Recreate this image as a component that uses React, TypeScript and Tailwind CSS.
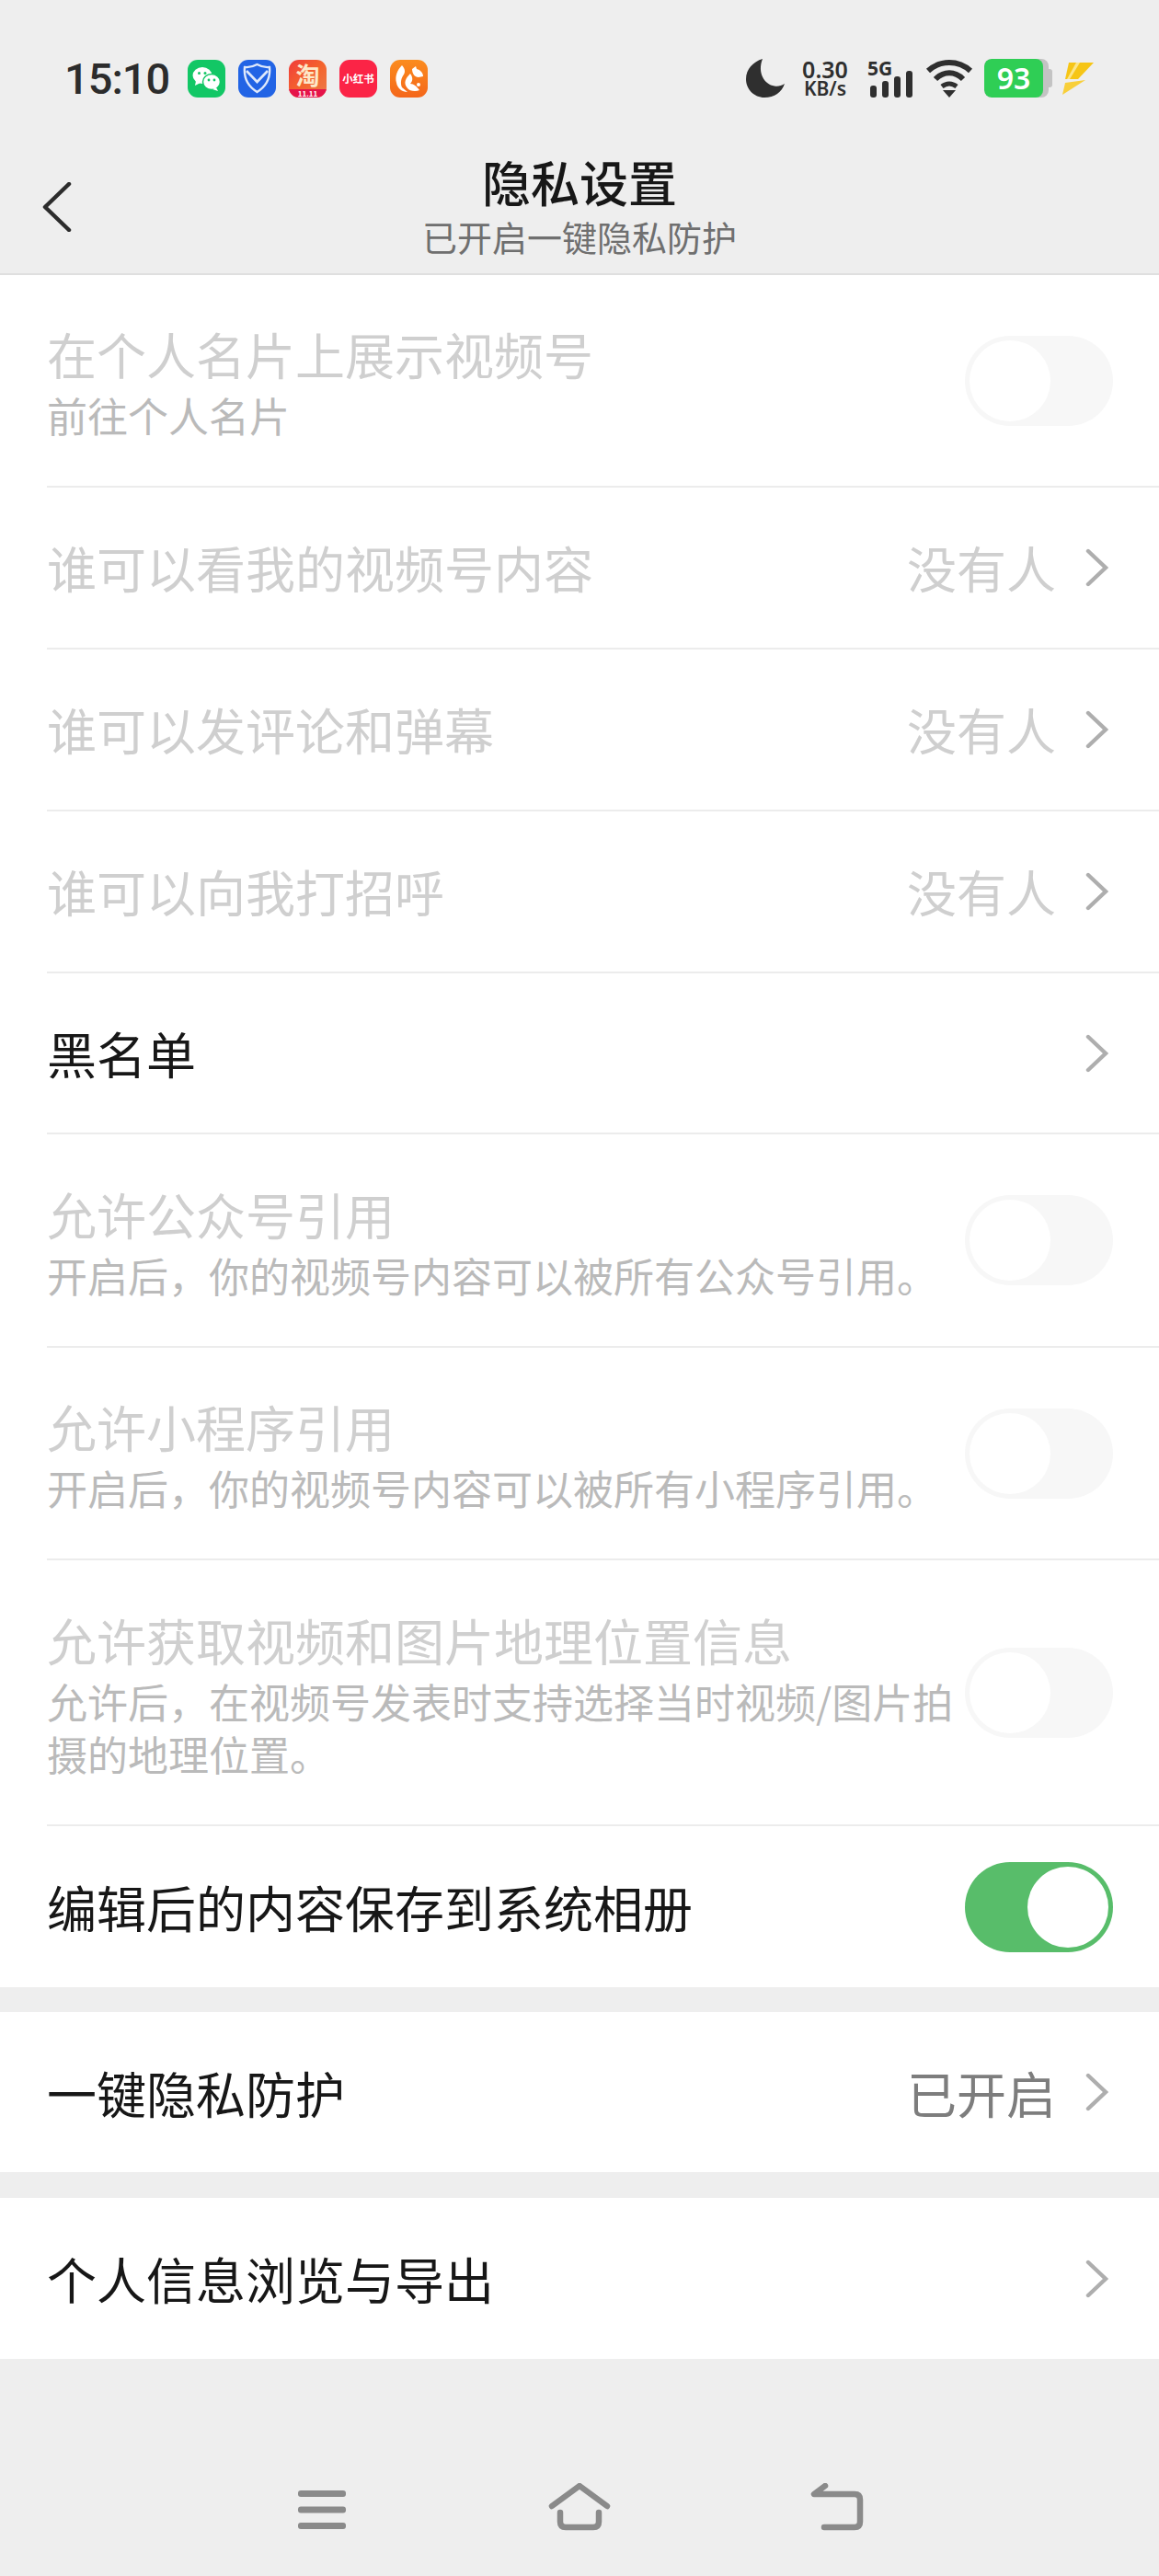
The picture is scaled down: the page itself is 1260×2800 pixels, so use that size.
type RowData = {
  title: string;
  sub?: string;
  value?: string;
  height: string;
  dim?: boolean;
  toggle?: "on" | "off";
  chevron?: boolean;
};

const rows: RowData[] = [
  { title: "在个人名片上展示视频号", sub: "前往个人名片", height: "h-[231px]", dim: true, toggle: "off" },
  { title: "谁可以看我的视频号内容", value: "没有人", height: "h-[176px]", dim: true, chevron: true },
  { title: "谁可以发评论和弹幕", value: "没有人", height: "h-[176px]", dim: true, chevron: true },
  { title: "谁可以向我打招呼", value: "没有人", height: "h-[176px]", dim: true, chevron: true },
  { title: "黑名单", height: "h-[175px]", chevron: true },
  { title: "允许公众号引用", sub: "开启后，你的视频号内容可以被所有公众号引用。", height: "h-[232px]", dim: true, toggle: "off" },
  { title: "允许小程序引用", sub: "开启后，你的视频号内容可以被所有小程序引用。", height: "h-[231px]", dim: true, toggle: "off" },
  { title: "允许获取视频和图片地理位置信息", sub: "允许后，在视频号发表时支持选择当时视频/图片拍摄的地理位置。", height: "h-[289px]", dim: true, toggle: "off" },
  { title: "编辑后的内容保存到系统相册", height: "h-[175px]", toggle: "on" },
];

const Chevron = () => (
  <svg width="26" height="42" viewBox="0 0 26 42" fill="none" className="mr-[4px] shrink-0">
    <path d="M3 3 L22 21 L3 39" stroke="#aeaeae" strokeWidth="4.4" strokeLinecap="round" strokeLinejoin="miter" />
  </svg>
);

const Toggle = ({ on }: { on: boolean }) => (
  <div className={`flex h-[98px] w-[161px] shrink-0 items-center rounded-full px-[5px] ${on ? "justify-end bg-[#58bd6a]" : "justify-start bg-[#f7f7f7]"}`}>
    <div className="h-[88px] w-[88px] rounded-full bg-white" />
  </div>
);

const Row = ({ row, last }: { row: RowData; last?: boolean }) => (
  <div className={`flex ${row.height} items-center pr-[50px] ${last ? "" : "border-b-2 border-[#ececec]"} ml-[51px]`}>
    <div className={`min-w-0 flex-1 ${row.sub ? "pt-[5px]" : ""}`}>
      <div className={`text-[54px] leading-[66px] ${row.dim ? "text-[#cfcfcf]" : "text-[#171717]"}`}>{row.title}</div>
      {row.sub && <div className="mt-[5px] text-[44px] leading-[57px] text-[#bababa]">{row.sub}</div>}
    </div>
    {row.value && <div className="mr-[32px] text-[54px] leading-[66px] text-[#cfcfcf]">{row.value}</div>}
    {row.chevron && <Chevron />}
    {row.toggle && <Toggle on={row.toggle === "on"} />}
  </div>
);

const AppIcons = () => (
  <div className="flex gap-[14px]">
    <div className="flex h-[41px] w-[41px] items-center justify-center rounded-[11px] bg-[#12c765]">
      <svg width="31" height="27" viewBox="0 0 31 27">
        <ellipse cx="11" cy="10" rx="10.5" ry="9" fill="#fff" />
        <path d="M4 16 L3 21 L9 18Z" fill="#fff" />
        <ellipse cx="21" cy="17" rx="9.5" ry="8.5" fill="#fff" stroke="#12c765" strokeWidth="1.5" />
        <path d="M26 23 L28 27 L22 25Z" fill="#fff" />
        <circle cx="7.5" cy="7.5" r="1.5" fill="#12c765" />
        <circle cx="14" cy="7.5" r="1.5" fill="#12c765" />
        <circle cx="18" cy="15" r="1.4" fill="#12c765" />
        <circle cx="24" cy="15" r="1.4" fill="#12c765" />
      </svg>
    </div>
    <div className="flex h-[41px] w-[41px] items-center justify-center rounded-[11px] bg-[#2264e5]">
      <svg width="31" height="34" viewBox="0 0 31 34" fill="none">
        <path d="M15.5 2 C20 4.5 25 5.5 29 5 C30 15 27 25 15.5 32 C4 25 1 15 2 5 C6 5.5 11 4.5 15.5 2Z" stroke="#dfe9fb" strokeWidth="2.4" />
        <path d="M4 9 L15.5 21 L27 9" stroke="#dfe9fb" strokeWidth="2.6" />
      </svg>
    </div>
    <div className="flex h-[41px] w-[41px] flex-col items-center overflow-hidden rounded-[11px] bg-gradient-to-br from-[#f0393a] via-[#f4632c] to-[#eb7c4a]">
      <span className="h-[32px] text-[26px] leading-[32px] font-bold text-[#fde8c9]">淘</span>
      <span className="h-[9px] w-full bg-[#e5134a] text-center text-[8px] leading-[9px] font-bold text-white">11.11</span>
    </div>
    <div className="flex h-[41px] w-[41px] items-center justify-center rounded-[11px] bg-[#fb2446]">
      <span className="text-[11.5px] leading-[14px] font-bold whitespace-nowrap text-white">小红书</span>
    </div>
    <div className="flex h-[41px] w-[41px] items-center justify-center rounded-[11px] bg-gradient-to-b from-[#fb8c1e] to-[#f4661a]">
      <svg width="33" height="31" viewBox="0 0 33 31" fill="#fff">
        <path d="M9 1 C4 6 1 13 3 20 C4 26 9 30 15 30 L9 25 C7 20 8 15 11 11 C13 8 12 4 9 1Z" />
        <path d="M18 10 C13 15 10 20 15 26 C17 29 24 30 28 28 C25 24 22 21 18 21 C21 18 21 14 18 10Z" />
        <path d="M20 5 L24 2 L25 5 C29 6 32 9 32 13 L27 14 C23 14 20 10 20 5Z" />
        <circle cx="27" cy="22" r="2" />
      </svg>
    </div>
  </div>
);

const StatusRight = () => (
  <div className="flex items-center">
    <svg width="42" height="42" viewBox="0 0 42 42" className="shrink-0">
      <path d="M18 0 C8 3 0 11 0 22 C0 33 9 42 20 42 C31 42 39 36 42 27 C38 29.5 35 30 31 29.5 C20 28 12 15 18 0Z" fill="#2f2f2f" />
    </svg>
    <div className="ml-[18px] flex h-[42px] w-[52px] flex-col items-center justify-between font-['Noto_Sans',sans-serif] font-semibold text-[#2f2f2f]">
      <span className="h-[22px] text-[25px] leading-[22px]">0.30</span>
      <span className="h-[20px] text-[21px] leading-[20px]">KB/s</span>
    </div>
    <div className="relative ml-[20px] h-[42px] w-[50px] font-['Noto_Sans',sans-serif] text-[21px] leading-[20px] font-bold text-[#2f2f2f]">
      5G
      <svg width="50" height="42" viewBox="0 0 50 42" fill="#2f2f2f" className="absolute top-0 left-0">
        <rect x="3" y="29" width="7" height="13" rx="3" />
        <rect x="16" y="24" width="7" height="18" rx="3" />
        <rect x="29" y="19" width="7" height="23" rx="3" />
        <rect x="42" y="13" width="7" height="29" rx="3" />
      </svg>
    </div>
    <svg width="52" height="42" viewBox="0 0 52 42" fill="none" className="ml-[13px] shrink-0" stroke="#2f2f2f" strokeWidth="6">
      <path d="M3 13 C16 1 36 1 49 13" />
      <path d="M11 22 C20 13 32 13 41 22" />
      <path d="M18 30 C23 26 29 26 34 30" strokeWidth="5" />
      <path d="M19 34 H33 L26 42Z" fill="#2f2f2f" stroke="none" />
    </svg>
    <div className="ml-[12px] flex items-center">
      <div className="flex h-[42px] w-[70px] items-center overflow-hidden rounded-[8px] bg-[#c3c3c3]">
        <div className="flex h-full w-[64px] items-center justify-center rounded-[8px] bg-[#2fce55] font-['Noto_Sans',sans-serif] text-[32px] font-semibold text-white">93</div>
      </div>
      <div className="h-[20px] w-[4px] rounded-r-[3px] bg-[#c3c3c3]" />
    </div>
    <svg width="34" height="36" viewBox="0 0 34 36" className="ml-[11px] shrink-0">
      <path d="M7 1 H34 L17 19 H3Z" fill="#f6c516" />
      <path d="M15 1 H19 L8 19 H5Z" fill="#fbe58a" />
      <path d="M3 23 L25 20 L0 36Z" fill="#f8cf3a" />
    </svg>
  </div>
);

export default function App() {
  return (
    <div className="flex h-[2800px] w-[1260px] flex-col overflow-hidden bg-[#eeeeee] font-['Noto_Sans_CJK_SC',sans-serif]">
      <div className="flex h-[64px] shrink-0" />
      <div className="flex h-[42px] shrink-0 items-center justify-between pr-[71px] pl-[70px]">
        <div className="flex items-center">
          <span className="w-[134px] font-['Roboto',sans-serif] text-[47px] leading-none font-medium tracking-[-1px] text-[#2c2c2c]">15:10</span>
          <AppIcons />
        </div>
        <StatusRight />
      </div>
      <div className="grid h-[193px] shrink-0 grid-cols-[1fr_auto_1fr] items-center border-b-2 border-[#dfdfdf]">
        <div className="pt-[46px] pl-[46px]">
          <svg width="32" height="54" viewBox="0 0 32 54" fill="none">
            <path d="M29 2 L3 27 L29 52" stroke="#2c2c2c" strokeWidth="4.5" strokeLinecap="round" strokeLinejoin="round" />
          </svg>
        </div>
        <div className="flex flex-col items-center pt-[42px]">
          <span className="text-[53px] leading-[64px] font-medium text-[#171717]">隐私设置</span>
          <span className="mt-[4px] text-[38px] leading-[48px] text-[#6f6f6f]">已开启一键隐私防护</span>
        </div>
        <div />
      </div>

      <div className="shrink-0 bg-white">
        {rows.map((row, index) => (
          <Row key={row.title} row={row} last={index === rows.length - 1} />
        ))}
      </div>

      <div className="mt-[27px] flex h-[174px] shrink-0 items-center bg-white pr-[50px] pl-[51px]">
        <div className="flex-1 text-[54px] text-[#171717]">一键隐私防护</div>
        <div className="mr-[32px] text-[54px] text-[#7d7d7d]">已开启</div>
        <Chevron />
      </div>
      <div className="mt-[28px] flex h-[175px] shrink-0 items-center bg-white pr-[50px] pl-[51px]">
        <div className="flex-1 text-[54px] text-[#171717]">个人信息浏览与导出</div>
        <Chevron />
      </div>

      <div className="mt-[142px] flex shrink-0 justify-center">
        <div className="flex w-[280px] justify-center">
          <svg width="54" height="44" viewBox="0 0 54 44" fill="#8a8a8a">
            <rect x="1" y="1" width="52" height="7" rx="3" />
            <rect x="1" y="18.5" width="52" height="7" rx="3" />
            <rect x="1" y="36" width="52" height="7" rx="3" />
          </svg>
        </div>
        <div className="flex w-[280px] justify-center">
          <svg width="68" height="52" viewBox="0 0 68 52" fill="none" className="mt-[-7px]" stroke="#8a8a8a" strokeWidth="6.5" strokeLinecap="round" strokeLinejoin="round">
            <path d="M4 25 L34 3 L64 25" />
            <path d="M13 32 V42 C13 46 15 48 19 48 H49 C53 48 55 46 55 42 V32" />
          </svg>
        </div>
        <div className="flex w-[280px] justify-center">
          <svg width="58" height="52" viewBox="0 0 58 52" fill="none" className="mt-[-7px]" stroke="#8a8a8a" strokeWidth="6.5" strokeLinecap="round" strokeLinejoin="round">
            <path d="M16 3 L4 12 H48 C52 12 54 14 54 18 V42 C54 46 52 48 48 48 H15" />
          </svg>
        </div>
      </div>
    </div>
  );
}
